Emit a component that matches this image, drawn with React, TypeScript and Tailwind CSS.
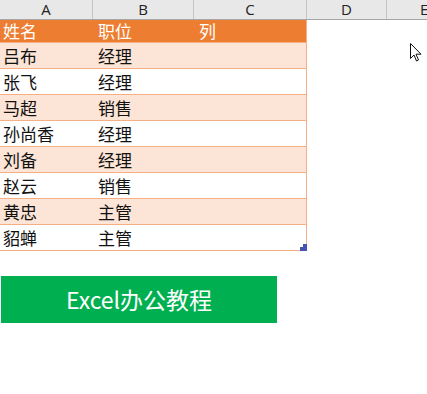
const cols = [
  { label: "A", w: "w-[93px]" },
  { label: "B", w: "w-[101px]" },
  { label: "C", w: "w-[113px]" },
  { label: "D", w: "w-[80px]" },
];

const rows = [
  ["吕布", "经理"],
  ["张飞", "经理"],
  ["马超", "销售"],
  ["孙尚香", "经理"],
  ["刘备", "经理"],
  ["赵云", "销售"],
  ["黄忠", "主管"],
  ["貂蝉", "主管"],
];

export default function App() {
  return (
    <div
      className="relative w-[427px] h-[394px] bg-white overflow-hidden text-[#111]"
      style={{ fontFamily: '"Noto Sans CJK SC", "Noto Sans", sans-serif' }}
    >
      {/* column headers */}
      <div className="flex h-[20px] bg-[#e8e8e8] border-b border-[#a6a6a6] text-[#222]">
        {cols.map((c) => (
          <div
            key={c.label}
            className={`${c.w} shrink-0 flex items-center justify-center border-r border-[#c4c4c4] text-[15px] leading-none`}
            style={{ fontFamily: '"Open Sans", sans-serif' }}
          >
            {c.label}
          </div>
        ))}
        <div
          className="flex-1 flex items-center pl-[33px] text-[15px] leading-none"
          style={{ fontFamily: '"Open Sans", sans-serif' }}
        >
          E
        </div>
      </div>

      {/* table */}
      <div className="relative w-[307px] border-r border-[#f4b084] text-[17px]">
        <div className="flex h-[22px] items-center bg-[#ed7d31] text-white">
          <div className="w-[93px] pl-[3px]">姓名</div>
          <div className="w-[101px] pl-[5px]">职位</div>
          <div className="flex-1 pl-[5px]">列</div>
        </div>
        {rows.map(([name, role], i) => (
          <div
            key={name}
            className={`flex h-[26px] items-center border-t border-[#f4b084] ${
              i % 2 === 0 ? "bg-[#fce4d6]" : "bg-white"
            }`}
          >
            <div className="w-[93px] pl-[3px]">{name}</div>
            <div className="w-[101px] pl-[5px]">{role}</div>
            <div className="flex-1" />
          </div>
        ))}
        <div className="border-t border-[#f4b084]" />
        <svg className="absolute right-[-1px] bottom-0" width="7" height="7" viewBox="0 0 7 7">
          <path d="M3 0h4v7H0V3h3z" fill="#4454b4" />
        </svg>
      </div>

      {/* banner */}
      <div className="ml-[1px] mt-[25px] w-[276px] h-[47px] bg-[#00b050] flex items-center justify-center text-white text-[23px]">
        Excel办公教程
      </div>

      {/* mouse cursor */}
      <svg className="absolute left-[410px] top-[43px]" width="13" height="20" viewBox="0 0 13 20">
        <path
          d="M0.5 0.5 L0.5 15.5 L4 12 L6.5 18 L8.5 17 L6 11.2 L11 11.2 Z"
          fill="white"
          stroke="#111"
          strokeWidth="1"
          strokeLinejoin="miter"
        />
      </svg>
    </div>
  );
}
